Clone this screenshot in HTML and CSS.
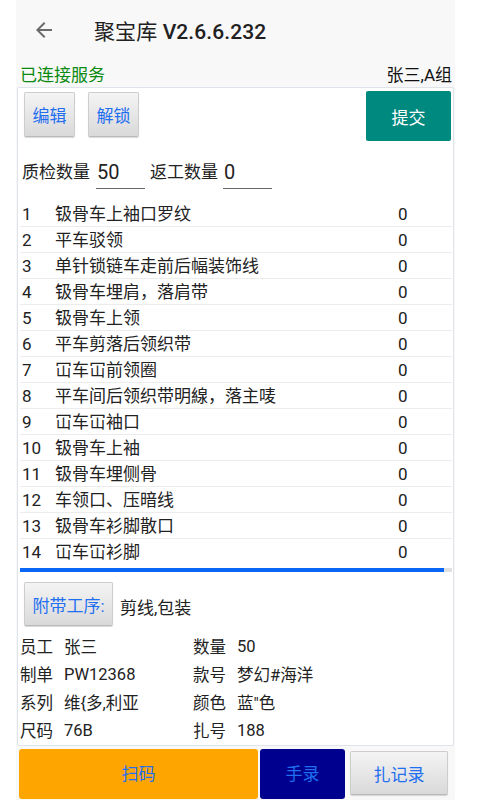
FILE: index.html
```html
<!DOCTYPE html>
<html lang="zh-CN">
<head>
<meta charset="utf-8">
<title>聚宝库</title>
<link rel="stylesheet" href="styles.css">
</head>
<body>
<div class="app">
  <header class="appbar">
    <svg class="back" viewBox="0 0 24 24" width="24" height="24"><path d="M20 11H7.83l5.59-5.59L12 4l-8 8 8 8 1.41-1.41L7.83 13H20v-2z" fill="#6b6b6b"/></svg>
    <div class="title"><span class="title-cjk">聚宝库</span> V2.6.6.232</div>
  </header>
  <div class="status">
    <span class="connected">已连接服务</span>
    <span class="user">张三,A组</span>
  </div>
  <main class="card">
    <div class="toolbar">
      <button class="btn gray small">编辑</button>
      <button class="btn gray small">解锁</button>
      <button class="btn submit">提交</button>
    </div>
    <div class="qty">
      <span class="qlabel">质检数量</span>
      <span class="qinput">50</span>
      <span class="qlabel second">返工数量</span>
      <span class="qinput">0</span>
    </div>
    <ul class="list">
      <li class="row"><span>1</span><span>钑骨车上袖口罗纹</span><span>0</span></li>
      <li class="row"><span>2</span><span>平车驳领</span><span>0</span></li>
      <li class="row"><span>3</span><span>单针锁链车走前后幅装饰线</span><span>0</span></li>
      <li class="row"><span>4</span><span>钑骨车埋肩，落肩带</span><span>0</span></li>
      <li class="row"><span>5</span><span>钑骨车上领</span><span>0</span></li>
      <li class="row"><span>6</span><span>平车剪落后领织带</span><span>0</span></li>
      <li class="row"><span>7</span><span>冚车冚前领圈</span><span>0</span></li>
      <li class="row"><span>8</span><span>平车间后领织带明線，落主唛</span><span>0</span></li>
      <li class="row"><span>9</span><span>冚车冚袖口</span><span>0</span></li>
      <li class="row"><span>10</span><span>钑骨车上袖</span><span>0</span></li>
      <li class="row"><span>11</span><span>钑骨车埋侧骨</span><span>0</span></li>
      <li class="row"><span>12</span><span>车领口、压暗线</span><span>0</span></li>
      <li class="row"><span>13</span><span>钑骨车衫脚散口</span><span>0</span></li>
      <li class="row"><span>14</span><span>冚车冚衫脚</span><span>0</span></li>
    </ul>
    <div class="progress"><div class="progress-fill"></div></div>
    <div class="extra">
      <button class="btn gray extra-btn">附带工序:</button>
      <span class="extra-text">剪线,包装</span>
    </div>
    <div class="info">
      <span>员工</span><span>张三</span><span>数量</span><span>50</span>
      <span>制单</span><span>PW12368</span><span>款号</span><span>梦幻#海洋</span>
      <span>系列</span><span>维{多,利亚</span><span>颜色</span><span>蓝"色</span>
      <span>尺码</span><span>76B</span><span>扎号</span><span>188</span>
    </div>
  </main>
  <footer class="bottombar">
    <button class="btn scan">扫码</button>
    <button class="btn manual">手录</button>
    <button class="btn gray record">扎记录</button>
  </footer>
</div>
</body>
</html>
```
FILE: styles.css
```css
* { box-sizing: border-box; }
html, body { margin: 0; padding: 0; background: #ffffff; }
body {
  font-family: "Roboto", "Noto Sans CJK SC", sans-serif;
  color: #222222;
  font-size: 17px;
}
.app {
  width: 439px;
  height: 800px;
  margin-left: 16px;
  background: #f8f8f8;
  overflow: hidden;
}
.appbar {
  height: 60px;
  display: flex;
  align-items: center;
  padding-left: 16px;
}
.back { flex: none; margin-right: 38px; }
.title {
  font-size: 21px;
  font-weight: 500;
  color: #212121;
  letter-spacing: 0.1px;
}
.title-cjk { font-weight: 400; }
.status {
  height: 27px;
  display: flex;
  justify-content: space-between;
  align-items: center;
  padding: 0 3px 0 4px;
  font-size: 17px;
}
.connected { color: #0b8a10; }
.user { color: #111; }

.card {
  margin: 0 1px;
  background: #ffffff;
  border: 1px solid #dfe3ea;
  border-radius: 2px;
  padding-bottom: 1px;
}
.toolbar {
  display: flex;
  align-items: flex-start;
  padding: 3px 2px 0 6px;
}
.btn {
  font-family: inherit;
  font-size: 17px;
  border: none;
  padding: 0;
  margin: 0;
  cursor: pointer;
}
.btn.gray {
  background: linear-gradient(#f4f4f4, #d9d9d9);
  border: 1px solid #cdcdcd;
  border-bottom-color: #b9b9b9;
  border-radius: 2px;
  box-shadow: 0 1px 1px rgba(0,0,0,0.15);
  color: #1f6ff0;
}
.btn.small {
  width: 51px;
  height: 45px;
  margin-top: 1px;
  margin-right: 13px;
}
.btn.submit {
  margin-left: auto;
  width: 85px;
  height: 50px;
  background: #00897f;
  color: #ffffff;
  border-radius: 2px;
}
.qty {
  display: flex;
  align-items: center;
  height: 34px;
  margin-top: 14px;
  padding-left: 4px;
}
.qlabel { line-height: 34px; margin-right: 6px; }
.qlabel.second { margin-left: 5px; margin-right: 5px; }
.qinput {
  width: 49px;
  height: 34px;
  line-height: 35px;
  font-size: 20px;
  padding-left: 1px;
  border-bottom: 1px solid #666666;
  color: #222;
}
.list {
  list-style: none;
  margin: 12px 1px 0 2px;
  padding: 0;
}
.row {
  display: grid;
  grid-template-columns: 33px 1fr 54px;
  height: 26px;
  line-height: 27px;
  padding-left: 2px;
  border-bottom: 1px solid #ececec;
  white-space: nowrap;
}
.row:last-child { border-bottom-color: transparent; }
.progress {
  margin: 3px 1px 0 2px;
  height: 4px;
  background: #e0e0e0;
}
.progress-fill {
  width: 424px;
  height: 4px;
  background: #0a66f5;
}
.extra {
  display: flex;
  align-items: center;
  margin-top: 10px;
  padding-left: 6px;
}
.extra-btn {
  width: 89px;
  height: 44px;
  margin-right: 7px;
}
.extra-text { padding-top: 5px; }
.info {
  display: grid;
  grid-template-columns: 44px 129px 44px 1fr;
  grid-auto-rows: 28px;
  align-items: center;
  margin-top: 6px;
  padding-left: 2px;
  font-size: 16.5px;
}
.bottombar {
  display: flex;
  align-items: flex-start;
  margin-top: 3px;
  padding-left: 3px;
}
.btn.scan {
  width: 239px;
  height: 50px;
  padding-bottom: 3px;
  background: #ffa500;
  color: #1f6ff0;
  border-radius: 3px;
}
.btn.manual {
  width: 85px;
  height: 50px;
  padding-bottom: 3px;
  margin-left: 2px;
  background: #00008e;
  color: #1f6ff0;
  border-radius: 3px;
}
.btn.record {
  width: 98px;
  height: 44px;
  margin-left: 5px;
  margin-top: 2px;
}
```
